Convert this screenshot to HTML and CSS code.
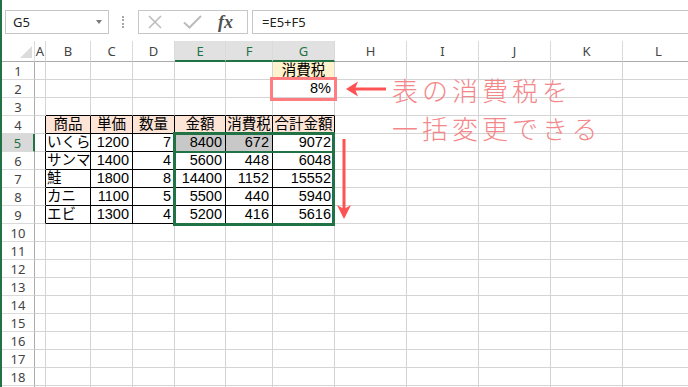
FILE: index.html
```html
<!DOCTYPE html>
<html lang="ja">
<head>
  <meta charset="UTF-8" />
  <meta name="viewport" content="width=device-width, initial-scale=1.0"/>
  <title>消費税 - 一括変更</title>
  <link rel="stylesheet" href="styles.css">
</head>
<body>
  <div class="app">
    <div class="toolbar">
      <div class="name-box">
        <span>G5</span>
        <span class="name-arrow"></span>
      </div>
      <div class="grip"></div>
      <div class="fx-box">
        <svg class="icon-cancel" width="14" height="14" viewBox="0 0 14 14">
          <path d="M1 1L13 13M13 1L1 13" stroke="#bdbdbd" stroke-width="1.6" fill="none"/>
        </svg>
        <svg class="icon-enter" width="19" height="14" viewBox="0 0 19 14">
          <path d="M1 7.5L6.5 12.5L18 1" stroke="#bdbdbd" stroke-width="2" fill="none"/>
        </svg>
        <span class="fx">fx</span>
      </div>
      <div class="formula">=E5+F5</div>
    </div>

    <div class="sheet" id="sheet"></div>

    <!-- selection of E5:G9 -->
    <div class="selection"></div>
    <div class="selection-row"></div>

    <svg class="marks" width="688" height="387" viewBox="0 0 688 387">
      <rect x="271.5" y="78.5" width="64" height="21" fill="none" stroke="#ff7c80" stroke-width="3"/>
      <path d="M386 89H354" stroke="#ff5252" stroke-width="3"/>
      <path d="M346 89L358 81.5L355 89L358 96.5Z" fill="#ff5252"/>
      <path d="M344 139V210" stroke="#ff5252" stroke-width="3"/>
      <path d="M344 219L337 205L344 209L351 205Z" fill="#ff5252"/>
    </svg>

    <div class="note">
      <div>表の消費税を</div>
      <div>一括変更できる</div>
    </div>
  </div>

  <script>
    const COLS = ['A','B','C','D','E','F','G','H','I','J','K','L'];
    const TABLE_COLS = 'BCDEFG';
    const LAST_ROW = 19; // only the top edge of row 19 is visible
    const taxRate = 0.08;

    const values = {
      G1: '消費税', G2: (taxRate * 100) + '%',
      B4: '商品', C4: '単価', D4: '数量', E4: '金額', F4: '消費税', G4: '合計金額'
    };

    const items = [
      ['いくら', 1200, 7],
      ['サンマ', 1400, 4],
      ['鮭', 1800, 8],
      ['カニ', 1100, 5],
      ['エビ', 1300, 4]
    ];

    items.forEach(([name, price, qty], i) => {
      const r = i + 5;
      const amount = price * qty;
      const tax = Math.round(amount * taxRate);
      values['B' + r] = name;
      values['C' + r] = price;
      values['D' + r] = qty;
      values['E' + r] = amount;
      values['F' + r] = tax;
      values['G' + r] = amount + tax;
    });

    const sheet = document.getElementById('sheet');

    function addCell(text, cls) {
      const cell = document.createElement('div');
      cell.className = 'cell ' + cls;
      cell.textContent = text;
      sheet.appendChild(cell);
      return cell;
    }

    // header row
    const corner = addCell('', 'col-head corner');
    corner.innerHTML = '<span class="select-all"></span>';
    COLS.forEach(c => addCell(c, 'col-head' + ('EFG'.includes(c) ? ' on' : '')));

    for (let r = 1; r <= LAST_ROW; r++) {
      addCell(r < LAST_ROW ? r : '', 'row-head' + (r === 5 ? ' on' : ''));
      COLS.forEach(c => {
        const key = c + r;
        const value = values[key] !== undefined ? values[key] : '';
        const inTable = r >= 4 && r <= 9 && TABLE_COLS.includes(c);
        let cls = '';
        if (inTable) cls += ' tb';
        if (r === 3 && TABLE_COLS.includes(c)) cls += ' tb-top';
        if (c === 'A' && r >= 4 && r <= 9) cls += ' tb-left';
        if (r === 4 && inTable) cls += ' head center';
        if (key === 'G1') cls += ' tax-label center';
        if (key === 'E5' || key === 'F5') cls += ' shaded';
        if (typeof value === 'number' || String(value).endsWith('%')) cls += ' num';
        addCell(value, cls);
      });
    }
  </script>
</body>
</html>
```

FILE: styles.css
```css
body {
  margin: 0;
  background: #fff;
  font-family: "Liberation Sans", "Noto Sans CJK JP", sans-serif;
  overflow: hidden;
}

.app {
  position: relative;
  height: 387px;
  padding-left: 2px;
  overflow: hidden;
  box-shadow: inset 2px 0 0 #217346;
}

/* formula bar */
.toolbar {
  display: flex;
  height: 41px;
  padding-top: 10px;
  box-sizing: border-box;
}

.name-box {
  display: flex;
  align-items: center;
  justify-content: space-between;
  margin-left: 3px;
  width: 104px;
  height: 24px;
  padding: 0 6px 0 7px;
  box-sizing: border-box;
  border: 1px solid #c6c6c6;
  font: 13px "Noto Sans", sans-serif;
  color: #222;
}

.name-arrow {
  width: 0;
  height: 0;
  border-left: 3.5px solid transparent;
  border-right: 3.5px solid transparent;
  border-top: 4px solid #7a7a7a;
}

.grip {
  width: 0;
  height: 12px;
  margin: 6px 14px 0 13px;
  border-left: 2px dotted #a8a8a8;
}

.fx-box {
  display: flex;
  align-items: center;
  width: 110px;
  height: 24px;
  padding-left: 9px;
  box-sizing: border-box;
  border: 1px solid #c6c6c6;
}

.icon-enter {
  margin-left: 21px;
}

.fx {
  margin-left: 16px;
  font: italic bold 18px "Liberation Serif", serif;
  color: #505050;
}

.formula {
  display: flex;
  align-items: center;
  flex: 1;
  height: 24px;
  margin-left: 4px;
  padding-left: 9px;
  box-sizing: border-box;
  border: 1px solid #c6c6c6;
  border-right: none;
  font: 13px "Noto Sans", sans-serif;
  color: #222;
}

/* worksheet */
.sheet {
  display: grid;
  grid-template-columns: 33px 11px 45px 42px 42px 51px 47px 62px repeat(5, 72px);
  grid-template-rows: 21px repeat(19, 18px);
}

.cell {
  display: flex;
  align-items: center;
  box-sizing: border-box;
  padding: 0 1px;
  border-right: 1px solid #d4d4d4;
  border-bottom: 1px solid #d4d4d4;
  font-size: 14.5px;
  line-height: 17px;
  white-space: nowrap;
  color: #000;
}

.num {
  justify-content: flex-end;
  padding-right: 3px;
}

.center {
  justify-content: center;
}

.col-head,
.row-head {
  justify-content: center;
  font: 13px "Noto Sans", sans-serif;
  color: #444;
}

.col-head {
  border-right-color: #dadada;
  border-bottom-color: #ababab;
}

.row-head {
  border-right-color: #ababab;
  border-bottom-color: #dadada;
}

.col-head.on {
  background: #e1e1e1;
  color: #217346;
  border-bottom: 2px solid #217346;
}

.row-head.on {
  background: #d9d9d9;
  color: #217346;
  border-right: 2px solid #217346;
}

.select-all {
  align-self: flex-end;
  margin: 0 1px 3px auto;
  width: 0;
  height: 0;
  border-left: 12px solid transparent;
  border-bottom: 12px solid #dcdcdc;
}

.tb {
  border-right-color: #000;
  border-bottom-color: #000;
}

.tb-top {
  border-bottom-color: #000;
}

.tb-left {
  border-right-color: #000;
}

.head {
  background: #fce4d6;
}

.tax-label {
  background: #fff2cc;
}

.shaded {
  background: #c8c8c8;
}

/* overlays */
.selection {
  position: absolute;
  left: 173px;
  top: 132px;
  width: 162px;
  height: 94px;
  box-sizing: border-box;
  border: 3px solid #217346;
}

.selection-row {
  position: absolute;
  left: 173px;
  top: 151px;
  width: 162px;
  height: 2px;
  background: #217346;
}

.marks {
  position: absolute;
  left: 0;
  top: 0;
  pointer-events: none;
}

.note {
  position: absolute;
  left: 392px;
  top: 71px;
  font: 300 26px/38px "Noto Sans CJK JP", sans-serif;
  letter-spacing: 4px;
  color: #f4878a;
}
```
